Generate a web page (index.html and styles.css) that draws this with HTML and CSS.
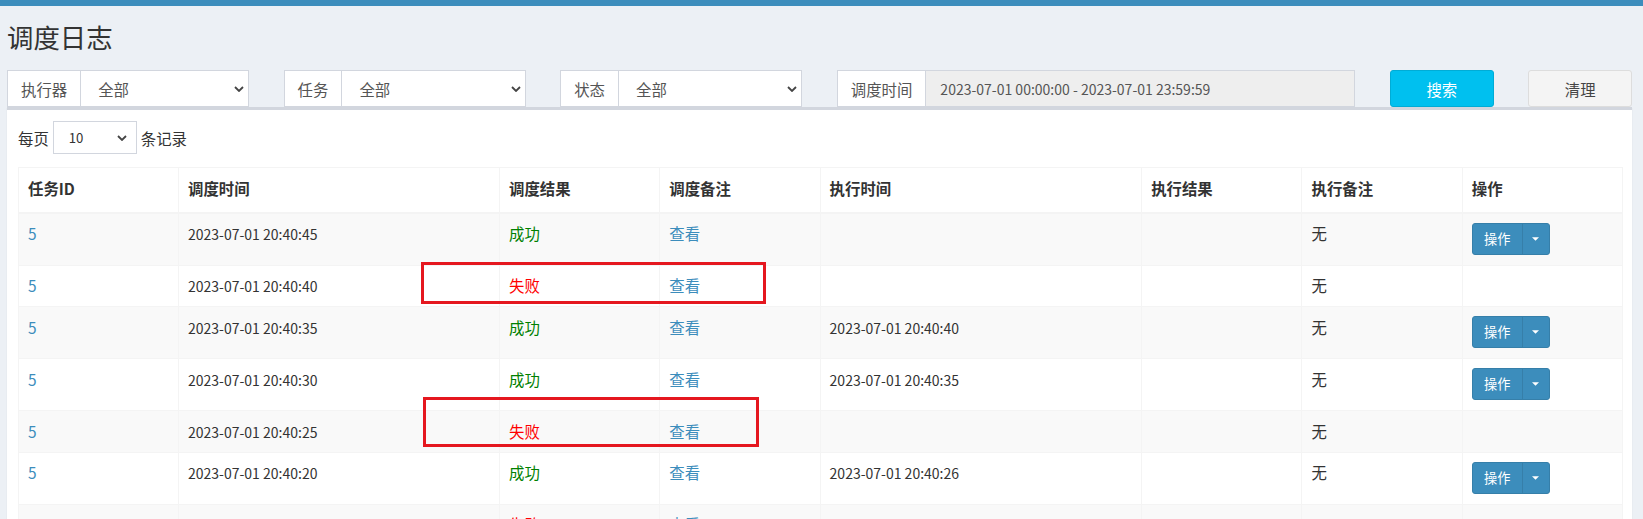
FILE: index.html
```html
<!DOCTYPE html>
<html lang="zh-CN">
<head>
<meta charset="utf-8">
<title>调度日志</title>
<link rel="stylesheet" href="styles.css">
</head>
<body>
<div class="topbar"></div>
<div class="page">
  <h1 class="page-title">调度日志</h1>
  <div class="filters">
    <div class="input-group span-2">
      <span class="addon">执行器</span>
      <div class="select"><span>全部</span><svg class="chev" viewBox="0 0 10 6"><path d="M1 1l4 4 4-4"/></svg></div>
    </div>
    <div class="input-group span-2">
      <span class="addon">任务</span>
      <div class="select"><span>全部</span><svg class="chev" viewBox="0 0 10 6"><path d="M1 1l4 4 4-4"/></svg></div>
    </div>
    <div class="input-group span-2">
      <span class="addon">状态</span>
      <div class="select"><span>全部</span><svg class="chev" viewBox="0 0 10 6"><path d="M1 1l4 4 4-4"/></svg></div>
    </div>
    <div class="input-group span-4">
      <span class="addon">调度时间</span>
      <div class="input readonly"><span class="num">2023-07-01 00:00:00 - 2023-07-01 23:59:59</span></div>
    </div>
    <button class="btn btn-info">搜索</button>
    <button class="btn btn-default">清理</button>
  </div>
  <div class="box">
    <div class="length">
      <span>每页</span>
      <div class="select select-sm"><span>10</span><svg class="chev" viewBox="0 0 10 6"><path d="M1 1l4 4 4-4"/></svg></div>
      <span>条记录</span>
    </div>
    <table class="log-table">
      <thead>
        <tr>
          <th class="w-id">任务ID</th>
          <th class="w-time">调度时间</th>
          <th class="w-s">调度结果</th>
          <th class="w-s">调度备注</th>
          <th class="w-time2">执行时间</th>
          <th class="w-s">执行结果</th>
          <th class="w-s">执行备注</th>
          <th class="w-s">操作</th>
        </tr>
      </thead>
      <tbody>
        <tr class="odd">
          <td><a class="link">5</a></td>
          <td><span class="num">2023-07-01 20:40:45</span></td>
          <td class="ok">成功</td>
          <td><a class="link">查看</a></td>
          <td></td>
          <td></td>
          <td>无</td>
          <td><div class="btn-group"><span class="btn-op">操作</span><span class="btn-caret"><svg viewBox="0 0 8 4"><path d="M0 0h8L4 4z"/></svg></span></div></td>
        </tr>
        <tr>
          <td><a class="link">5</a></td>
          <td><span class="num">2023-07-01 20:40:40</span></td>
          <td class="fail">失败</td>
          <td><a class="link">查看</a></td>
          <td></td>
          <td></td>
          <td>无</td>
          <td></td>
        </tr>
        <tr class="odd">
          <td><a class="link">5</a></td>
          <td><span class="num">2023-07-01 20:40:35</span></td>
          <td class="ok">成功</td>
          <td><a class="link">查看</a></td>
          <td><span class="num">2023-07-01 20:40:40</span></td>
          <td></td>
          <td>无</td>
          <td><div class="btn-group"><span class="btn-op">操作</span><span class="btn-caret"><svg viewBox="0 0 8 4"><path d="M0 0h8L4 4z"/></svg></span></div></td>
        </tr>
        <tr>
          <td><a class="link">5</a></td>
          <td><span class="num">2023-07-01 20:40:30</span></td>
          <td class="ok">成功</td>
          <td><a class="link">查看</a></td>
          <td><span class="num">2023-07-01 20:40:35</span></td>
          <td></td>
          <td>无</td>
          <td><div class="btn-group"><span class="btn-op">操作</span><span class="btn-caret"><svg viewBox="0 0 8 4"><path d="M0 0h8L4 4z"/></svg></span></div></td>
        </tr>
        <tr class="odd">
          <td><a class="link">5</a></td>
          <td><span class="num">2023-07-01 20:40:25</span></td>
          <td class="fail">失败</td>
          <td><a class="link">查看</a></td>
          <td></td>
          <td></td>
          <td>无</td>
          <td></td>
        </tr>
        <tr>
          <td><a class="link">5</a></td>
          <td><span class="num">2023-07-01 20:40:20</span></td>
          <td class="ok">成功</td>
          <td><a class="link">查看</a></td>
          <td><span class="num">2023-07-01 20:40:26</span></td>
          <td></td>
          <td>无</td>
          <td><div class="btn-group"><span class="btn-op">操作</span><span class="btn-caret"><svg viewBox="0 0 8 4"><path d="M0 0h8L4 4z"/></svg></span></div></td>
        </tr>
        <tr class="odd">
          <td><a class="link">5</a></td>
          <td><span class="num">2023-07-01 20:40:15</span></td>
          <td class="fail">失败</td>
          <td><a class="link">查看</a></td>
          <td></td>
          <td></td>
          <td></td>
          <td></td>
        </tr>
      </tbody>
    </table>
  </div>
</div>
<div class="mark mark-1"></div>
<div class="mark mark-2"></div>
</body>
</html>
```

FILE: styles.css
```css
* { box-sizing: border-box; }
html, body { margin: 0; padding: 0; }
body {
  position: relative;
  width: 1643px;
  height: 519px;
  overflow: hidden;
  background: #ecf0f5;
  font-family: "Noto Sans CJK SC", "Noto Sans", sans-serif;
  font-size: 15.4px;
  line-height: 22px;
  color: #333;
}
.num { font-size: 14px; line-height: 1; }
.topbar { height: 6px; background: #3c8dbc; }
.page { padding: 0 11px 0 7px; }
.page-title {
  margin: 0;
  padding-top: 16px;
  font-size: 26.4px;
  line-height: 29px;
  font-weight: 400;
  color: #333;
}
.filters {
  display: grid;
  grid-template-columns: repeat(12, 1fr);
  column-gap: 34.6px;
  margin-top: 19px;
  height: 37px;
}
.span-2 { grid-column: span 2; }
.span-4 { grid-column: span 4; }
.input-group { display: flex; height: 37px; }
.addon {
  display: flex;
  align-items: center;
  padding: 0 13px;
  background: #fff;
  border: 1px solid #d2d6de;
  border-right: 0;
  color: #555;
  white-space: nowrap;
}
.select {
  flex: 1;
  display: flex;
  align-items: center;
  justify-content: space-between;
  padding: 0 4px 0 17px;
  background: #fff;
  border: 1px solid #d2d6de;
  color: #555;
}
.chev { width: 10px; height: 6px; fill: none; stroke: #444; stroke-width: 1.8; }
.input {
  flex: 1;
  display: flex;
  align-items: center;
  padding: 0 14px;
  border: 1px solid #d2d6de;
  background: #eee;
  color: #555;
  white-space: nowrap;
}
.btn {
  height: 37px;
  border: 1px solid;
  border-radius: 3px;
  font: inherit;
  padding: 0;
}
.btn-info { background: #00c0ef; border-color: #00acd6; color: #fff; }
.btn-default { background: #f4f4f4; border-color: #ddd; color: #444; }
.box {
  height: 420px;
  background: #fff;
  border-top: 3px solid #d2d6de;
  padding: 11px;
  box-shadow: 0 1px 1px rgba(0, 0, 0, .1);
}
.length { display: flex; align-items: center; height: 33px; }
.select-sm {
  flex: none;
  width: 84px;
  height: 33px;
  margin: 0 4px;
  padding: 0 9px 0 15px;
  font-size: 13.2px;
  color: #333;
}
.log-table {
  width: 100%;
  margin-top: 12.6px;
  border-collapse: collapse;
  table-layout: fixed;
}
.log-table th, .log-table td {
  border: 1px solid #f4f4f4;
  padding: 8.5px 9px 10px;
  text-align: left;
  vertical-align: top;
  white-space: nowrap;
}
.log-table th {
  padding-top: 9.5px;
  padding-bottom: 12.5px;
  border-bottom-width: 2px;
  font-weight: 700;
  color: #333;
}
.w-id { width: 160px; }
.w-time { width: 321px; }
.w-s { width: 160.3px; }
.w-time2 { width: 321.6px; }
.log-table tr.odd td { background: #f9f9f9; }
.link { color: #3c8dbc; text-decoration: none; }
.ok { color: #008000; }
.fail { color: #ff0000; }
.btn-group {
  display: inline-flex;
  height: 32px;
  margin: 0.7px 0 -0.2px;
  vertical-align: top;
  border: 1px solid #367fa9;
  border-radius: 3px;
  background: #3c8dbc;
  color: #fff;
  font-size: 13.2px;
  line-height: 20px;
}
.btn-op { width: 49px; display: flex; align-items: center; justify-content: center; }
.btn-caret {
  width: 27px;
  display: flex;
  align-items: center;
  justify-content: center;
  border-left: 1px solid #367fa9;
}
.btn-caret svg { width: 7px; height: 4px; fill: #fff; }
.mark {
  position: absolute;
  border: 3px solid #e5171f;
}
.mark-1 { left: 421px; top: 262px; width: 345px; height: 42px; }
.mark-2 { left: 423px; top: 397px; width: 336px; height: 50px; }
```
